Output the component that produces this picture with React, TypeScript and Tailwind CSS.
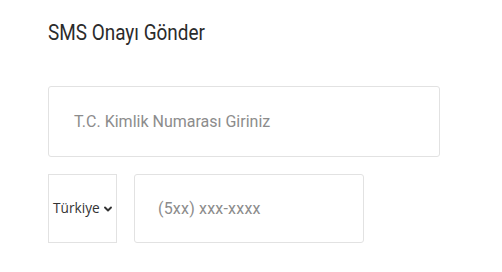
import { ChevronDown } from "lucide-react";

const App = () => {
  return (
    <div className="w-[502px] h-[272px] bg-white pl-12 pt-[18px] font-['Roboto',sans-serif]">
      <h2 className="text-[22px] leading-[30px] text-[#2b2b2b]">
        <span className="inline-block origin-left scale-x-[0.86]">SMS Onayı Gönder</span>
      </h2>

      <div className="mt-[38px] w-[392px] h-[71px] border border-[#e2e2e2] rounded-[3px] flex items-center pl-[25px]">
        <span className="text-[16px] text-[#8c8c8c]">T.C. Kimlik Numarası Giriniz</span>
      </div>

      <div className="mt-[17px] flex gap-[17px]">
        <div className="w-[69px] h-[69px] border border-[#e2e2e2] flex items-center pl-[4px] gap-[2px] font-['Open_Sans',sans-serif]">
          <span className="text-[13.7px] text-[#333]">Türkiye</span>
          <ChevronDown className="w-[12px] h-[12px] text-[#333]" strokeWidth={3.8} />
        </div>
        <div className="w-[230px] h-[69px] border border-[#e2e2e2] rounded-[3px] flex items-center pl-[23px]">
          <span className="text-[16px] tracking-[0.2px] text-[#8c8c8c]">(5xx) xxx-xxxx</span>
        </div>
      </div>
    </div>
  );
};

export default App;
